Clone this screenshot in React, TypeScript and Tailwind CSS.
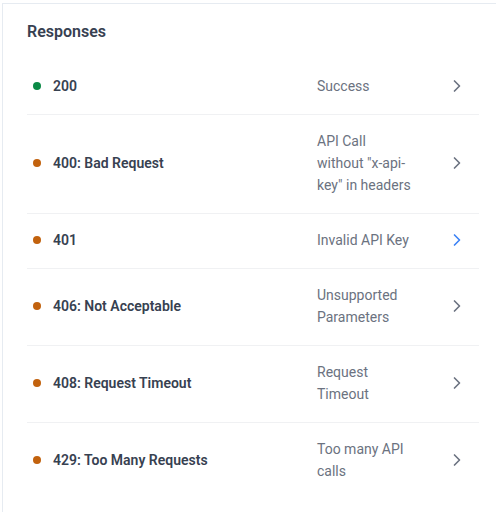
import React from "react";
import { ChevronRight } from "lucide-react";

type Row = { code: string; desc: string; color: string; active?: boolean };

const rows: Row[] = [
  { code: "200", desc: "Success", color: "bg-[#0b8a46]" },
  { code: "400: Bad Request", desc: 'API Call without "x-api-key" in headers', color: "bg-[#c2620e]" },
  { code: "401", desc: "Invalid API Key", color: "bg-[#c2620e]", active: true },
  { code: "406: Not Acceptable", desc: "Unsupported Parameters", color: "bg-[#c2620e]" },
  { code: "408: Request Timeout", desc: "Request Timeout", color: "bg-[#c2620e]" },
  { code: "429: Too Many Requests", desc: "Too many API calls", color: "bg-[#c2620e]" },
];

export default function App() {
  return (
    <div className="w-[498px] h-[512px] bg-white overflow-hidden" style={{ fontFamily: "Roboto, 'Liberation Sans', sans-serif" }}>
      <div className="ml-[2px] mt-[3px] w-[494px] h-[520px] border-l border-t border-[#e6ebf1] pl-[24px] pr-[17px]">
        <h2 className="pt-[16px] pb-[16px] text-[16px] leading-[24px] font-semibold text-[#374151]">Responses</h2>
        <div>
          {rows.map((r, i) => (
            <div key={r.code} className={`flex items-center pt-[15px] pb-[17px] ${i < rows.length - 1 ? "border-b border-[#f0f1f3]" : ""}`}>
              <div className="w-[290px] flex items-center pl-[6px] gap-[12px]">
                <span className={`w-[8px] h-[8px] rounded-full ${r.color}`} />
                <span className="text-[14px] font-semibold text-[#374151]">{r.code}</span>
              </div>
              <div className="w-[96px] text-[14px] leading-[22px] text-[#6b7280]" style={{ overflowWrap: "break-word" }}>{r.desc}</div>
              <div className="flex-1 flex justify-end pr-[12px]">
                <ChevronRight size={20} strokeWidth={2} className={r.active ? "text-[#3b82f6]" : "text-[#6b7280]"} />
              </div>
            </div>
          ))}
        </div>
      </div>
    </div>
  );
}
